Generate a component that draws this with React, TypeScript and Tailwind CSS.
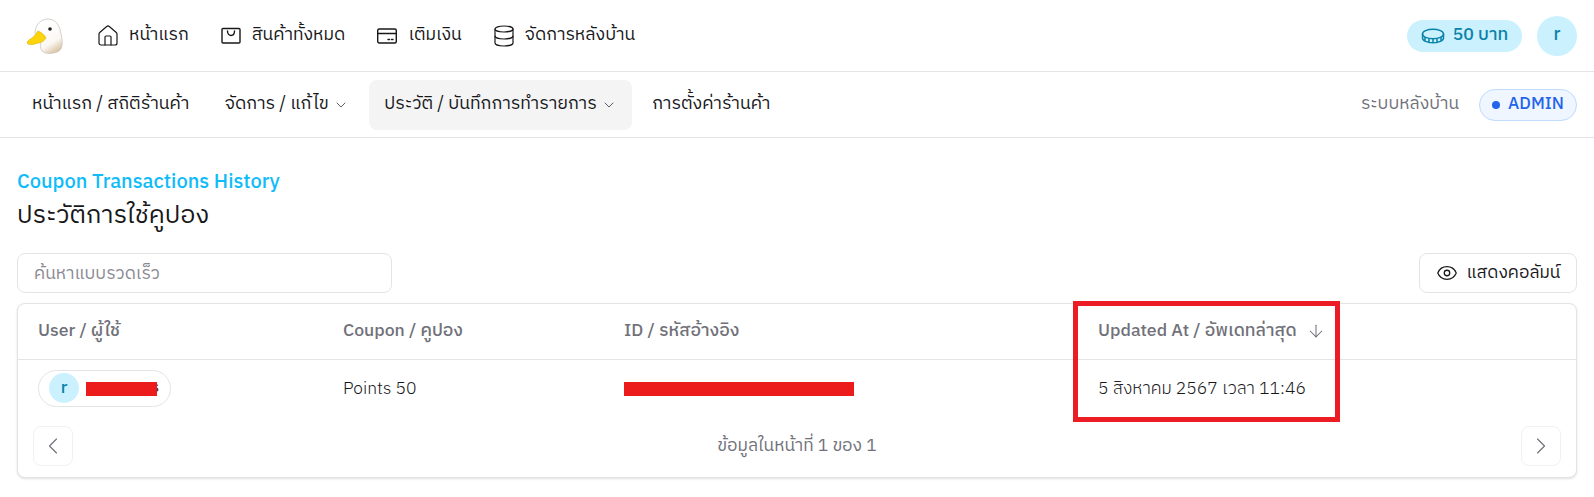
import { ArrowDown, ChevronDown, ChevronLeft, ChevronRight, Database, Eye, House } from "lucide-react";

const font = { fontFamily: '"IBM Plex Sans Thai", Inter, "Noto Sans Thai", "Noto Sans", sans-serif' };

function Duck() {
  return (
    <svg viewBox="0 0 36 36" className="h-9 w-9">
      <defs>
        <linearGradient id="duckBody" x1="0.3" y1="0.2" x2="0.7" y2="1">
          <stop offset="0" stopColor="#ffffff" />
          <stop offset="0.65" stopColor="#fbf8f3" />
          <stop offset="1" stopColor="#d9c3a6" />
        </linearGradient>
      </defs>
      <path d="M8 14C9 5 15 1 21 1c8 0 12 7 13 15 2 9 2 16-4 18-5 2-12 2-15-1-2-3-2-6-1-9C11 22 8 18 8 14Z" fill="url(#duckBody)" stroke="#c9c5bd" strokeWidth="0.8" />
      <circle cx="23" cy="11" r="1.8" fill="#222222" />
      <path d="M11 13c3 1 7 4 8 7-2 4-7 5-11 6-3 1-7 1-8-1 0-2 3-4 5-5 3-2 4-5 6-7Z" fill="#fbd40b" stroke="#d9a908" strokeWidth="0.5" />
    </svg>
  );
}

function BagIcon() {
  return (
    <svg viewBox="0 0 20 20" className="h-[20px] w-[20px]" fill="none" stroke="currentColor" strokeWidth="1.4" strokeLinecap="round" strokeLinejoin="round">
      <rect x="1" y="2.500" width="18" height="14.500" rx="1" />
      <path d="M6.500 5c0 6 7 6 7 0" />
    </svg>
  );
}

function CardIcon() {
  return (
    <svg viewBox="0 0 20 20" className="h-[20px] w-[20px]" fill="none" stroke="currentColor" strokeWidth="1.4" strokeLinecap="round" strokeLinejoin="round">
      <rect x="0.700" y="3" width="18.600" height="14" rx="1.500" />
      <path d="M1 7.500h18M11 13.500h1.500M14.500 13.500H16" />
    </svg>
  );
}

function CoinIcon() {
  return (
    <svg viewBox="0 0 24 16" className="h-[16px] w-[24px]" fill="none" stroke="currentColor" strokeWidth="1.5" strokeLinecap="round" strokeLinejoin="round">
      <ellipse cx="12" cy="6" rx="10.500" ry="4.800" />
      <path d="M1.500 6v4c0 2.700 4.700 4.800 10.500 4.800S22.500 12.700 22.500 10V6M8 11v3.500M12 11.300v3.500M16 11v3.500M4 9.500v3M20 9.500v3" />
    </svg>
  );
}

function TopItem({ icon, label }: { icon: React.ReactNode; label: string }) {
  return (
    <a className="flex h-10 items-center gap-[11px] px-4 text-[17.7px] text-[#18181b]">
      {icon}
      <span>{label}</span>
    </a>
  );
}

function SubItem({ label, active, chevron }: { label: string; active?: boolean; chevron?: boolean }) {
  return (
    <a className={`flex h-[50px] items-center gap-[4px] rounded-lg px-[15px] text-[17.8px] font-normal text-[#18181b] ${active ? "bg-[#f4f4f5]" : ""}`}>
      <span>{label}</span>
      {chevron && <ChevronDown className="h-[16px] w-[16px] text-[#3f3f46]" strokeWidth={1.25} />}
    </a>
  );
}

function PageButton({ children }: { children: React.ReactNode }) {
  return (
    <button className="flex h-10 w-10 items-center justify-center rounded-lg border border-[#f1f1f3] bg-white text-[#71717a]">
      {children}
    </button>
  );
}

export default function App() {
  return (
    <div style={font} className="relative h-[497px] w-[1594px] overflow-hidden bg-white">
      <header className="flex h-[72px] items-center justify-between border-b border-[#e4e4e7] pl-[27px] pr-[17px]">
        <div className="flex items-center">
          <Duck />
          <nav className="ml-[19px] flex items-center">
            <TopItem icon={<House className="-mx-[2px] h-6 w-6" strokeWidth={1.2} />} label="หน้าแรก" />
            <TopItem icon={<BagIcon />} label="สินค้าทั้งหมด" />
            <TopItem icon={<CardIcon />} label="เติมเงิน" />
            <TopItem icon={<Database className="-mx-[2px] h-6 w-6" strokeWidth={1.2} />} label="จัดการหลังบ้าน" />
          </nav>
        </div>
        <div className="flex items-center gap-[15px]">
          <div className="flex h-8 w-[115px] items-center justify-center gap-2 rounded-full bg-[#ccf1fe] text-[17.6px] font-medium text-[#0a83a8]">
            <CoinIcon />
            <span>50 บาท</span>
          </div>
          <div className="flex h-10 w-10 items-center justify-center rounded-full bg-[#ccf1fe] text-[18px] font-medium text-[#0a83a8]">r</div>
        </div>
      </header>

      <div className="flex h-[66px] items-center justify-between border-b border-[#e4e4e7] pl-[17px] pr-[17px]">
        <nav className="flex items-center gap-[5.5px]">
          <SubItem label="หน้าแรก / สถิติร้านค้า" />
          <SubItem label="จัดการ / แก้ไข" chevron />
          <SubItem label="ประวัติ / บันทึกการทำรายการ" chevron active />
          <SubItem label="การตั้งค่าร้านค้า" />
        </nav>
        <div className="flex items-center gap-5">
          <span className="text-[17.5px] text-[#71717a]">ระบบหลังบ้าน</span>
          <span className="flex h-8 w-[98px] items-center justify-center gap-[8px] rounded-full border border-[#bfdbfe] bg-[#eff6ff] text-[17px] font-medium text-[#2563eb]">
            <span className="h-2 w-2 rounded-full bg-[#2563eb]" />
            ADMIN
          </span>
        </div>
      </div>

      <main className="px-[17px] pt-[33px]">
        <p className="text-[20px] font-medium leading-[24px] text-[#0fbcf9]">Coupon Transactions History</p>
        <h1 className="mt-[5px] text-[25.2px] font-normal leading-[32px] text-[#18181b]">ประวัติการใช้คูปอง</h1>

        <div className="mt-[21px] flex items-center justify-between">
          <input
            readOnly
            placeholder="ค้นหาแบบรวดเร็ว"
            className="h-10 w-[375px] rounded-lg border border-[#e4e4e7] bg-white px-4 text-[17.5px] outline-none placeholder:text-[#8a8a93]"
          />
          <button className="flex h-10 w-[158px] items-center justify-center gap-[9px] rounded-lg border border-[#e4e4e7] bg-white text-[17.4px] font-normal text-[#18181b]">
            <Eye className="h-[22px] w-[22px]" strokeWidth={1.4} />
            แสดงคอลัมน์
          </button>
        </div>

        <div className="mt-[10px] h-[175px] rounded-lg border border-[#e4e4e7] bg-white shadow-sm">
          <table className="w-full table-fixed border-collapse text-left">
            <thead>
              <tr className="h-[55px] border-b border-[#e4e4e7] text-[17.6px] text-[#71717a]">
                <th className="w-[305px] pl-5 font-medium">User / ผู้ใช้</th>
                <th className="w-[281px] pl-5 font-medium">Coupon / คูปอง</th>
                <th className="w-[474px] pl-5 font-medium">ID / รหัสอ้างอิง</th>
                <th className="pl-5 font-medium">
                  <span className="flex items-center gap-[9px]">
                    Updated At / อัพเดทล่าสุด
                    <ArrowDown className="h-5 w-5" strokeWidth={1.25} />
                  </span>
                </th>
              </tr>
            </thead>
            <tbody>
              <tr className="h-[58px] text-[17.5px] font-light text-[#18181b]">
                <td className="pl-5">
                  <span className="relative flex h-[37px] w-[133px] items-center gap-2 rounded-full border border-[#e4e4e7] pl-[10px]">
                    <span className="flex h-[30px] w-[30px] items-center justify-center rounded-full bg-[#ccf1fe] font-medium text-[#0a83a8]">r</span>
                    <span className="ml-auto pr-[11px] text-[15px] font-normal">s</span>
                    <span className="absolute left-[47px] top-[11px] h-[14px] w-[71px] bg-[#ec1c1c]" />
                  </span>
                </td>
                <td className="pl-5 pt-[2px]">Points 50</td>
                <td className="pl-5">
                  <span className="relative block h-[24px] w-[230px]">
                    <span className="absolute left-0 top-[6px] h-[14px] w-[230px] bg-[#ec1c1c]" />
                  </span>
                </td>
                <td className="pl-5 pt-[2px]">5 สิงหาคม 2567 เวลา 11:46</td>
              </tr>
            </tbody>
          </table>
          <div className="mt-[9px] flex items-center justify-between px-[15px]">
            <PageButton><ChevronLeft className="h-7 w-7" strokeWidth={1} /></PageButton>
            <span className="text-[17.5px] text-[#71717a]">ข้อมูลในหน้าที่ 1 ของ 1</span>
            <PageButton><ChevronRight className="h-7 w-7" strokeWidth={1} /></PageButton>
          </div>
        </div>
      </main>

      <div className="pointer-events-none absolute left-[1073px] top-[301px] h-[121px] w-[267px] border-[5px] border-[#ec1c24]" />
    </div>
  );
}
